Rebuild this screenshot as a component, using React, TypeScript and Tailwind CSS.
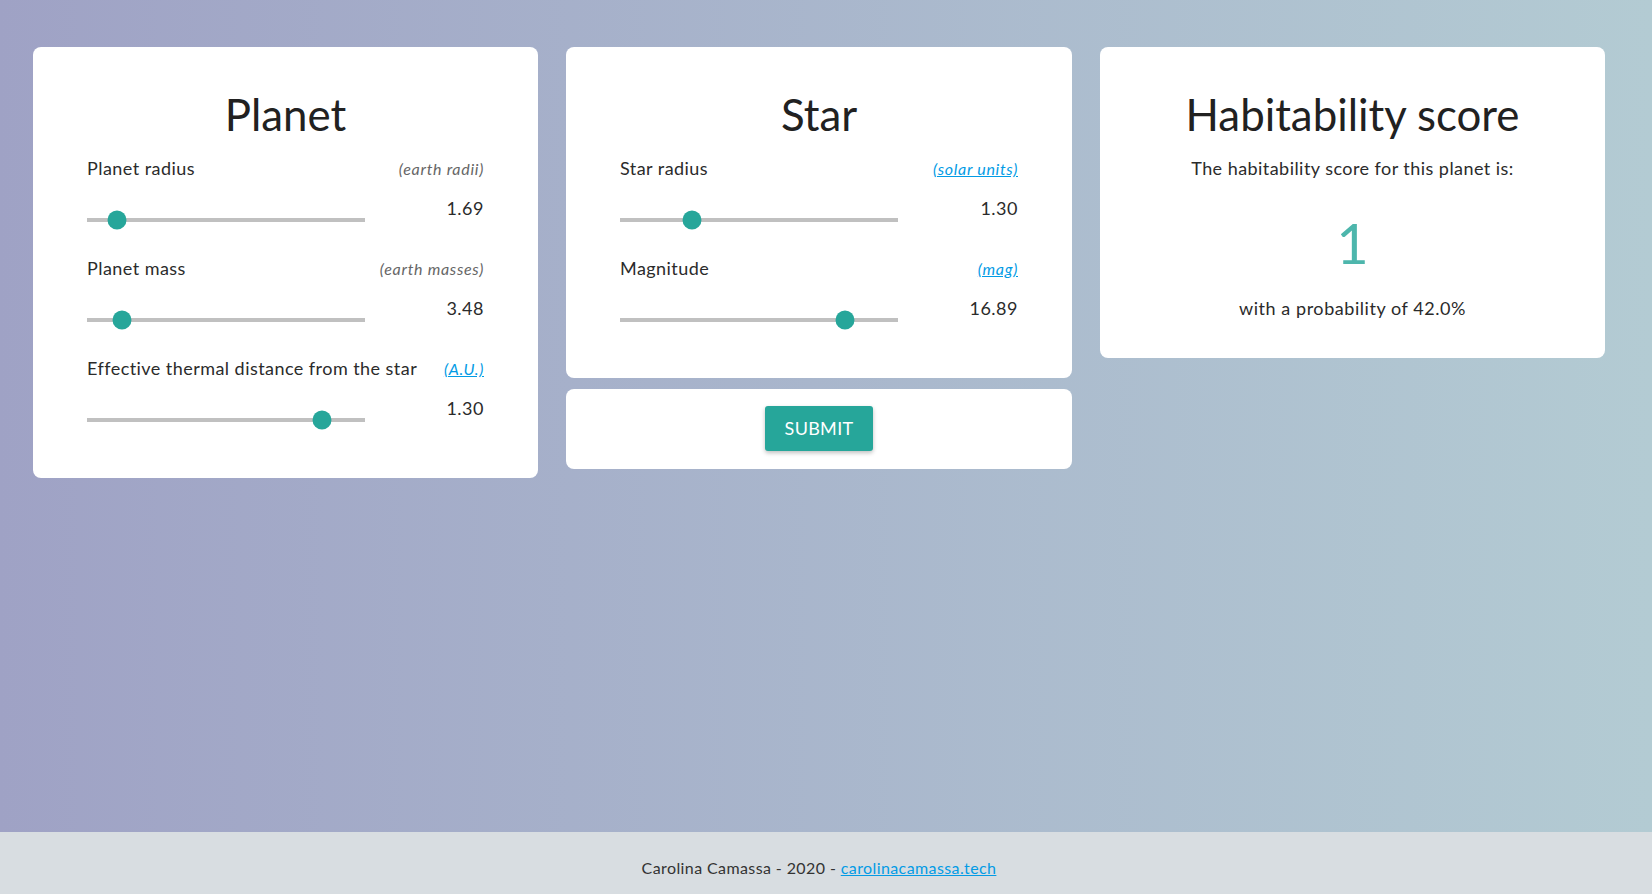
import React from "react";

type Row = {
  label: string;
  unit: string;
  link?: boolean;
  value: string;
  pos: number;
};

const planetRows: Row[] = [
  { label: "Planet radius", unit: "(earth radii)", value: "1.69", pos: 10.8 },
  { label: "Planet mass", unit: "(earth masses)", value: "3.48", pos: 12.6 },
  {
    label: "Effective thermal distance from the star",
    unit: "(A.U.)",
    link: true,
    value: "1.30",
    pos: 84.5,
  },
];

const starRows: Row[] = [
  { label: "Star radius", unit: "(solar units)", link: true, value: "1.30", pos: 26 },
  { label: "Magnitude", unit: "(mag)", link: true, value: "16.89", pos: 81 },
];

function SliderRow({ row }: { row: Row }) {
  return (
    <div className="h-[100px]">
      <div className="flex h-[24px] items-baseline justify-between">
        <span className="text-[18px] leading-[24px] tracking-[0.45px] text-[#2b2b2b]">
          {row.label}
        </span>
        {row.link ? (
          <a
            href="#"
            className="text-[16px] italic leading-[24px] tracking-[0.7px] text-[#039be5] underline"
          >
            {row.unit}
          </a>
        ) : (
          <span className="text-[16px] italic leading-[24px] tracking-[0.7px] text-[#666]">
            {row.unit}
          </span>
        )}
      </div>

      <div className="mt-[16px] flex items-start justify-between">
        <div className="relative mt-[22px] h-[4px] w-[278px] bg-[#c0c0c0]">
          <span
            className="absolute top-1/2 h-[19px] w-[19px] -translate-x-1/2 -translate-y-1/2 rounded-full bg-[#26a69a]"
            style={{ left: `${row.pos}%` }}
          />
        </div>
        <span className="text-[18px] leading-[24px] tracking-[0.5px] text-[#2b2b2b]">
          {row.value}
        </span>
      </div>
    </div>
  );
}

function CardTitle({ children }: { children: React.ReactNode }) {
  return (
    <h3 className="mb-[18px] text-center text-[43.8px] font-normal leading-[48px] text-[#212121]">
      {children}
    </h3>
  );
}

export default function App() {
  return (
    <div className="flex h-screen flex-col font-[Lato,'Open_Sans',sans-serif]">
      <main className="flex-1 bg-gradient-to-r from-[#9fa2c5] to-[#b3cbd3] pl-[33px] pt-[47px]">
        <div className="grid grid-cols-[505px_506px_505px] items-start gap-[28px]">
          <section className="rounded-[8px] bg-white px-[54px] pb-[22px] pt-[43px]">
            <CardTitle>Planet</CardTitle>
            {planetRows.map((row) => (
              <SliderRow key={row.label} row={row} />
            ))}
          </section>

          <div className="flex flex-col gap-[11px]">
            <section className="rounded-[8px] bg-white px-[54px] pb-[22px] pt-[43px]">
              <CardTitle>Star</CardTitle>
              {starRows.map((row) => (
                <SliderRow key={row.label} row={row} />
              ))}
            </section>

            <section className="flex justify-center rounded-[8px] bg-white pb-[18px] pt-[17px]">
              <button
                type="submit"
                className="h-[45px] w-[108px] rounded-[3px] bg-[#26a69a] text-[18px] tracking-[0.3px] text-white shadow-[0_2px_4px_rgba(0,0,0,0.25)]"
              >
                SUBMIT
              </button>
            </section>
          </div>

          <section className="rounded-[8px] bg-white px-[54px] pb-[38px] pt-[43px] text-center">
            <CardTitle>Habitability score</CardTitle>
            <p className="text-[18px] leading-[24px] tracking-[0.45px] text-[#2b2b2b]">
              The habitability score for this planet is:
            </p>
            <p className="mt-[31px] text-[56px] leading-[64px] text-[#4db6ac]">
              1
            </p>
            <p className="mt-[21px] text-[18px] leading-[24px] tracking-[0.55px] text-[#2b2b2b]">
              with a probability of 42.0%
            </p>
          </section>
        </div>
      </main>

      <footer className="h-[62px] bg-[#d8dde1] pr-[14px] pt-[26px] text-center text-[16px] leading-[20px] tracking-[0.4px] text-[#333]">
        Carolina Camassa - 2020 -{" "}
        <a href="#" className="text-[#039be5] underline">
          carolinacamassa.tech
        </a>
      </footer>
    </div>
  );
}
